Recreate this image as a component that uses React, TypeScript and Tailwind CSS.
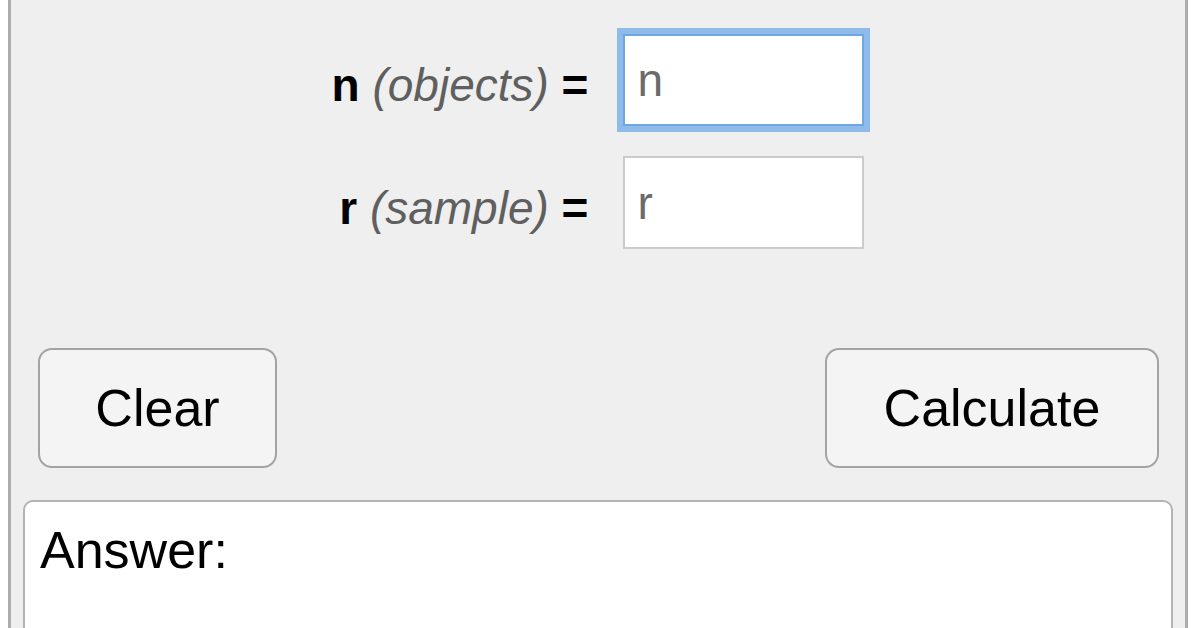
import { useState } from 'react';

export default function App() {
    const [n, setN] = useState('');
    const [r, setR] = useState('');
    const [answer, setAnswer] = useState('');

    const fact = (k: number) => {
        let out = 1;
        for (let i = 2; i <= k; i++) out *= i;
        return out;
    };

    const calculate = () => {
        const nv = parseInt(n, 10);
        const rv = parseInt(r, 10);
        if (isNaN(nv) || isNaN(rv) || rv > nv || rv < 0) {
            setAnswer('');
            return;
        }
        setAnswer(String(Math.round(fact(nv) / (fact(rv) * fact(nv - rv)))));
    };

    const clear = () => {
        setN('');
        setR('');
        setAnswer('');
    };

    return (
        <div className="w-[1197px] h-[628px] bg-white overflow-hidden font-['Liberation_Sans',Arial,sans-serif] text-black">
            <div className="ml-[8px] w-[1180px] h-full border-x-[3px] border-[#acacac] bg-[#efefef] flex flex-col">
                {/* Inputs */}
                <div className="mt-[34px] mx-auto grid grid-cols-[auto_241px] gap-x-[35px] gap-y-[30px] items-center">
                    <div className="text-[46px] leading-none whitespace-nowrap text-right pt-[10px]">
                        <b>n</b> <i className="text-[#5f5f5f]">(objects)</i> <b>=</b>
                    </div>
                    <input
                        value={n}
                        onChange={(e) => setN(e.target.value)}
                        placeholder="n"
                        className="w-[241px] h-[92px] bg-white border-2 border-[#6fa6e4] shadow-[0_0_0_6px_#8fbbeb] outline-none pl-[12px] text-[46px] placeholder:text-[#6b6b6b]"
                    />
                    <div className="text-[46px] leading-none whitespace-nowrap text-right pt-[10px]">
                        <b>r</b> <i className="text-[#5f5f5f]">(sample)</i> <b>=</b>
                    </div>
                    <input
                        value={r}
                        onChange={(e) => setR(e.target.value)}
                        placeholder="r"
                        className="w-[241px] h-[93px] bg-white border-2 border-[#cbcbcb] outline-none pl-[12px] text-[46px] placeholder:text-[#6b6b6b]"
                    />
                </div>

                {/* Buttons */}
                <div className="mt-[99px] px-[27px] pr-[26px] flex justify-between">
                    <button
                        onClick={clear}
                        className="w-[239px] h-[120px] rounded-[14px] border-2 border-[#a3a3a3] bg-[#f4f4f4] text-[52px] leading-none"
                    >
                        Clear
                    </button>
                    <button
                        onClick={calculate}
                        className="w-[334px] h-[120px] rounded-[14px] border-2 border-[#a3a3a3] bg-[#f4f4f4] text-[52px] leading-none"
                    >
                        Calculate
                    </button>
                </div>

                {/* Answer */}
                <div className="mt-[32px] mx-[12px] h-[170px] shrink-0 rounded-t-[10px] border-2 border-[#b3b3b3] bg-white pl-[15px] pt-[22px]">
                    <div className="text-[52px] leading-none">Answer: {answer}</div>
                </div>
            </div>
        </div>
    );
}
